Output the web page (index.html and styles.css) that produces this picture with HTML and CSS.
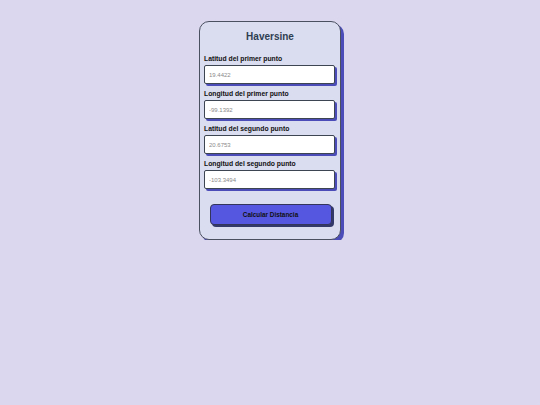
FILE: index.html
```html
<!DOCTYPE html>
<html lang="es">
<head>
<meta charset="utf-8">
<title>Haversine</title>
<link rel="stylesheet" href="styles.css">
</head>
<body>
<div class="card">
  <h1 class="title">Haversine</h1>
  <div class="field">
    <label class="label">Latitud del primer punto</label>
    <input class="input" type="text" placeholder="19.4422">
  </div>
  <div class="field">
    <label class="label">Longitud del primer punto</label>
    <input class="input" type="text" placeholder="-99.1392">
  </div>
  <div class="field">
    <label class="label">Latitud del segundo punto</label>
    <input class="input" type="text" placeholder="20.6753">
  </div>
  <div class="field">
    <label class="label">Longitud del segundo punto</label>
    <input class="input" type="text" placeholder="-103.3494">
  </div>
  <div class="actions">
    <button class="button" type="button">Calcular Distancia</button>
  </div>
</div>
</body>
</html>
```
FILE: styles.css
```css
html, body {
  margin: 0;
  padding: 0;
}
body {
  background: #dad7ee;
  font-family: "Liberation Sans", Arial, sans-serif;
  padding-top: 21px;
}
.card {
  box-sizing: border-box;
  width: 142px;
  margin: 0 auto;
  background: #dadcef;
  border: 1px solid #4a5060;
  border-radius: 10px;
  box-shadow: 3px 3px 0 #4b4cb8;
  padding: 8px 4px 14px 4px;
  display: flex;
  flex-direction: column;
}
.title {
  margin: 0 0 11px 0;
  text-align: center;
  font-size: 10px;
  font-weight: bold;
  color: #2e3e52;
  line-height: 14px;
}
.field {
  display: flex;
  flex-direction: column;
  margin-bottom: 6px;
}
.label {
  font-size: 6.8px;
  font-weight: bold;
  color: #111;
  line-height: 8px;
  margin-bottom: 2px;
}
.input {
  box-sizing: border-box;
  width: 131px;
  height: 19px;
  margin: 0;
  padding: 0 4px;
  border: 1px solid #3d4452;
  border-radius: 2px;
  background: #fff;
  box-shadow: 2px 2px 0 #4b4cb8;
  font-family: "Liberation Sans", Arial, sans-serif;
  font-size: 6px;
  outline: none;
}
.input::placeholder {
  color: #8a8a8a;
}
.actions {
  display: flex;
  justify-content: center;
  padding-top: 9px;
}
.button {
  box-sizing: border-box;
  width: 122px;
  height: 21px;
  margin: 0 0 0 1px;
  border: 1px solid #33365a;
  border-radius: 4px;
  background: #5557e0;
  box-shadow: 2px 2px 0 #333a6a;
  font-family: "Liberation Sans", Arial, sans-serif;
  font-size: 6.4px;
  font-weight: bold;
  color: #111;
}
```
